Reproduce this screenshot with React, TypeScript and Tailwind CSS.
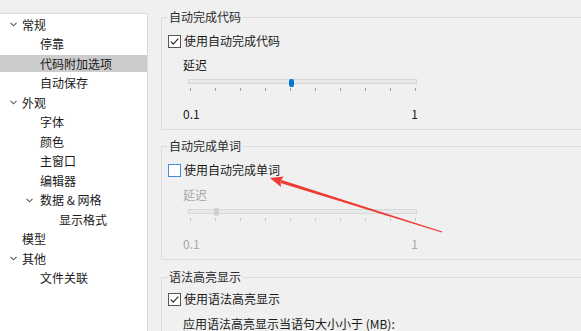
import React from "react";

const font = { fontFamily: '"Noto Sans CJK SC", "Noto Sans", sans-serif' };

function Chevron() {
  return (
    <svg width="7" height="5" viewBox="0 0 7 5" className="flex-none">
      <path d="M0.5 0.8 L3.5 3.8 L6.5 0.8" fill="none" stroke="#5a5a5a" strokeWidth="1.1" />
    </svg>
  );
}

function Checkbox({ checked, focus }: { checked: boolean; focus?: boolean }) {
  return (
    <div
      className={
        focus
          ? "w-[13px] h-[13px] flex-none bg-white border border-[#3c8ede] flex items-center justify-center"
          : "w-[13px] h-[13px] flex-none bg-white border border-[#555555] flex items-center justify-center"
      }
    >
      {checked && (
        <svg width="11" height="11" viewBox="0 0 11 11">
          <path d="M1.8 5.6 L4.3 8.1 L9.3 2.6" fill="none" stroke="#333333" strokeWidth="1.3" />
        </svg>
      )}
    </div>
  );
}

function Slider({ disabled }: { disabled?: boolean }) {
  const ticks = Array.from({ length: 10 });
  return (
    <div>
      <div className="relative ml-[26px] w-[229px] h-[5px] bg-[#e7eaea] border border-[#d6d8d8]">
        {disabled ? (
          <div className="absolute left-[25px] top-[-2px] w-[5px] h-[8px] rounded-[2px] bg-[#cfcfcf]" />
        ) : (
          <div className="absolute left-[100px] top-[-1px] w-[5px] h-[8px] rounded-[2px] bg-[#0078d7]" />
        )}
      </div>
      <div className="mt-[4px] ml-[28px] w-[226px] h-[3px] flex justify-between">
        {ticks.map((_, i) => (
          <div key={i} className={disabled ? "w-[1px] h-[3px] bg-[#c4c4c4]" : "w-[1px] h-[3px] bg-[#9a9a9a]"} />
        ))}
      </div>
    </div>
  );
}

export default function App() {
  return (
    <div
      className="relative w-[581px] h-[331px] overflow-hidden bg-[#f0f0f0] flex text-[12px] text-[#1a1a1a]"
      style={font}
    >
      {/* Tree */}
      <aside className="w-[148px] flex-none mt-[13px] bg-white border-t border-r border-[#d9d9d9] pt-[1px] leading-[16px]">
        <div className="h-[19.5px] flex items-center pl-[10px]">
          <Chevron />
          <span className="ml-[5px]">常规</span>
        </div>
        <div className="h-[19.5px] flex items-center pl-[40px]">停靠</div>
        <div className="h-[19.5px] flex items-center">
          <div className="w-full h-[17px] bg-[#cccccc] flex items-center pl-[40px]">代码附加选项</div>
        </div>
        <div className="h-[19.5px] flex items-center pl-[40px]">自动保存</div>
        <div className="h-[19.5px] flex items-center pl-[10px]">
          <Chevron />
          <span className="ml-[5px]">外观</span>
        </div>
        <div className="h-[19.5px] flex items-center pl-[40px]">字体</div>
        <div className="h-[19.5px] flex items-center pl-[40px]">颜色</div>
        <div className="h-[19.5px] flex items-center pl-[40px]">主窗口</div>
        <div className="h-[19.5px] flex items-center pl-[40px]">编辑器</div>
        <div className="h-[19.5px] flex items-center pl-[26px]">
          <Chevron />
          <span className="ml-[7px]">数据 &amp; 网格</span>
        </div>
        <div className="h-[19.5px] flex items-center pl-[59px]">显示格式</div>
        <div className="h-[19.5px] flex items-center pl-[22px]">模型</div>
        <div className="h-[19.5px] flex items-center pl-[10px]">
          <Chevron />
          <span className="ml-[5px]">其他</span>
        </div>
        <div className="h-[19.5px] flex items-center pl-[40px]">文件关联</div>
      </aside>

      {/* Content */}
      <main className="flex-1 pl-[13px] pt-[9px] leading-[16px] overflow-hidden">
        {/* Group 1 */}
        <fieldset className="w-[460px] border border-[#dcdcdc] pb-[7px]">
          <legend className="ml-[6px] px-[1px] h-[16px] text-[#2a2a2a]">自动完成代码</legend>
          <div className="mt-[8px] h-[16px] flex items-center pl-[6px]">
            <Checkbox checked />
            <span className="ml-[3px]">使用自动完成代码</span>
          </div>
          <div className="mt-[8px] h-[16px] pl-[21px]">延迟</div>
          <div className="mt-[6px]">
            <Slider />
          </div>
          <div className="mt-[15px] h-[16px] ml-[21px] w-[235px] flex justify-between">
            <span>0.1</span>
            <span>1</span>
          </div>
        </fieldset>

        {/* Group 2 */}
        <fieldset className="mt-[8px] w-[460px] border border-[#dcdcdc] pb-[7px]">
          <legend className="ml-[6px] px-[1px] h-[16px] text-[#2a2a2a]">自动完成单词</legend>
          <div className="mt-[8px] h-[16px] flex items-center pl-[6px]">
            <Checkbox checked={false} focus />
            <span className="ml-[3px]">使用自动完成单词</span>
          </div>
          <div className="mt-[9px] h-[16px] pl-[21px] text-[#a8a8a8]">延迟</div>
          <div className="mt-[6px]">
            <Slider disabled />
          </div>
          <div className="mt-[15px] h-[16px] ml-[21px] w-[235px] flex justify-between text-[#a8a8a8]">
            <span>0.1</span>
            <span>1</span>
          </div>
        </fieldset>

        {/* Group 3 */}
        <fieldset className="mt-[9px] w-[460px] border border-[#dcdcdc] pb-[10px]">
          <legend className="ml-[6px] px-[1px] h-[16px] text-[#2a2a2a]">语法高亮显示</legend>
          <div className="mt-[6px] h-[16px] flex items-center pl-[6px]">
            <Checkbox checked />
            <span className="ml-[3px]">使用语法高亮显示</span>
          </div>
          <div className="mt-[9px] h-[16px] pl-[21px]">应用语法高亮显示当语句大小小于 (MB):</div>
        </fieldset>
      </main>

      {/* Red annotation arrow */}
      <svg className="absolute left-0 top-0 pointer-events-none" width="581" height="331" viewBox="0 0 581 331">
        <polygon points="281.5,180 442.2,231.5 441.8,232.5 280.5,183" fill="#ee3b33" />
        <polygon points="270,178 283.5,176.5 280.5,181.5 281,187" fill="#ee3b33" />
      </svg>
    </div>
  );
}
